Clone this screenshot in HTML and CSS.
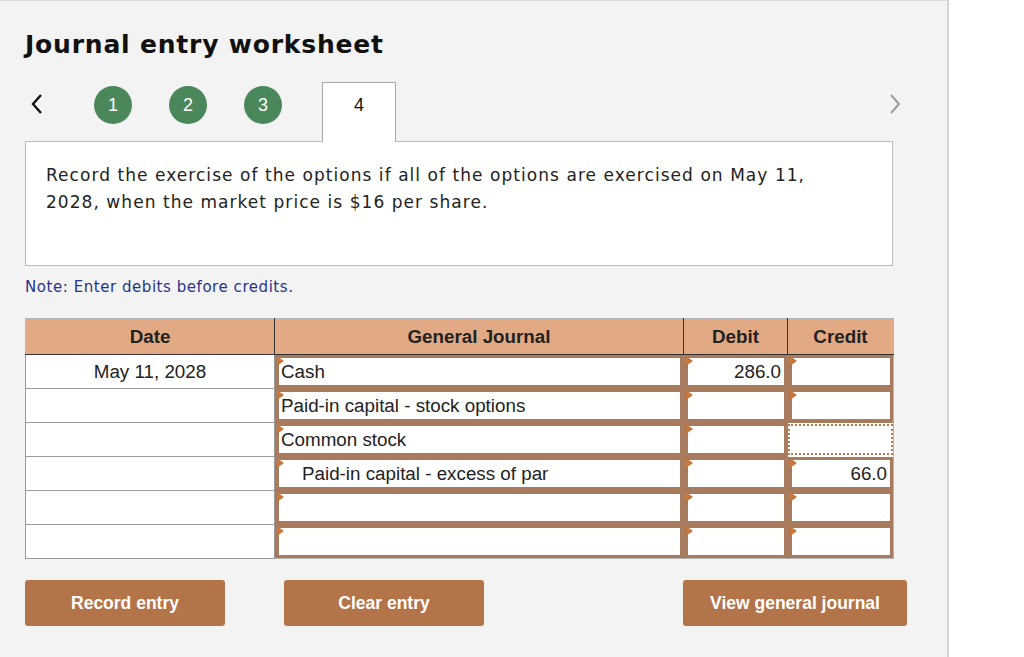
FILE: index.html
```html
<!DOCTYPE html>
<html lang="en">
<head>
    <meta charset="UTF-8">
    <title>Journal entry worksheet</title>
    <link rel="stylesheet" href="styles.css">
</head>
<body>
    <div class="worksheet">
        <h1>Journal entry worksheet</h1>

        <div class="steps">
            <svg class="nav-prev" width="16" height="24" viewBox="0 0 16 24">
                <path d="M12 3 L4 12 L12 21" fill="none" stroke="#111" stroke-width="2.4"/>
            </svg>
            <span class="step step-1">1</span>
            <span class="step">2</span>
            <span class="step">3</span>
            <span class="tab">4</span>
            <svg class="nav-next" width="16" height="24" viewBox="0 0 16 24">
                <path d="M4 3 L12 12 L4 21" fill="none" stroke="#999" stroke-width="2"/>
            </svg>
        </div>

        <div class="question">
            Record the exercise of the options if all of the options are exercised on May 11, 2028, when the market price is $16 per share.
        </div>

        <p class="note">Note: Enter debits before credits.</p>

        <table class="journal">
            <thead>
                <tr>
                    <th class="col-date">Date</th>
                    <th class="col-account">General Journal</th>
                    <th class="col-debit">Debit</th>
                    <th class="col-credit">Credit</th>
                </tr>
            </thead>
            <tbody>
                <tr>
                    <td class="date">May 11, 2028</td>
                    <td class="entry"><div class="field">Cash</div></td>
                    <td class="entry"><div class="field num">286.0</div></td>
                    <td class="entry"><div class="field num"></div></td>
                </tr>
                <tr>
                    <td class="date"></td>
                    <td class="entry"><div class="field">Paid-in capital - stock options</div></td>
                    <td class="entry"><div class="field num"></div></td>
                    <td class="entry"><div class="field num"></div></td>
                </tr>
                <tr>
                    <td class="date"></td>
                    <td class="entry"><div class="field">Common stock</div></td>
                    <td class="entry"><div class="field num"></div></td>
                    <td class="entry focused"><div class="field num"></div></td>
                </tr>
                <tr>
                    <td class="date"></td>
                    <td class="entry"><div class="field indent">Paid-in capital - excess of par</div></td>
                    <td class="entry"><div class="field num"></div></td>
                    <td class="entry"><div class="field num">66.0</div></td>
                </tr>
                <tr>
                    <td class="date"></td>
                    <td class="entry"><div class="field"></div></td>
                    <td class="entry"><div class="field num"></div></td>
                    <td class="entry"><div class="field num"></div></td>
                </tr>
                <tr>
                    <td class="date"></td>
                    <td class="entry"><div class="field"></div></td>
                    <td class="entry"><div class="field num"></div></td>
                    <td class="entry"><div class="field num"></div></td>
                </tr>
            </tbody>
        </table>

        <div class="actions">
            <button class="btn">Record entry</button>
            <button class="btn btn-clear">Clear entry</button>
            <button class="btn btn-view">View general journal</button>
        </div>
    </div>
</body>
</html>
```

FILE: styles.css
```css
body {
    margin: 0;
    background: #fff;
    font-family: 'Liberation Sans', Arial, sans-serif;
}
.worksheet {
    width: 922px;
    height: 656px;
    padding-left: 25px;
    background: #f3f3f3;
    border-top: 1px solid #dcdcdc;
    border-right: 2px solid #d2d2d2;
    overflow: hidden;
}
h1 {
    margin: 28px 0 0;
    font-family: 'DejaVu Sans', Verdana, sans-serif;
    font-size: 25px;
    letter-spacing: 0.8px;
    line-height: 32px;
    font-weight: bold;
    color: #111;
}

/* step navigation */
.steps {
    display: flex;
    align-items: flex-start;
    width: 878px;
    height: 59px;
    margin-top: 21px;
}
.nav-prev {
    margin: 10px 0 0 4px;
}
.step {
    display: flex;
    justify-content: center;
    align-items: center;
    width: 38px;
    height: 38px;
    margin: 4px 0 0 37px;
    border-radius: 50%;
    background: #4a875a;
    color: #fff;
    font-size: 18px;
}
.step-1 {
    margin-left: 49px;
}
.tab {
    position: relative;
    z-index: 1;
    box-sizing: border-box;
    width: 74px;
    height: 60px;
    margin-left: 40px;
    padding-top: 12px;
    text-align: center;
    background: #fff;
    border: 1px solid #a9a9a9;
    border-bottom: none;
    font-size: 18px;
    color: #111;
}
.nav-next {
    margin: 10px 0 0 auto;
}

.question {
    box-sizing: border-box;
    width: 868px;
    height: 125px;
    padding: 20px 60px 20px 20px;
    background: #fff;
    border: 1px solid #bcbcbc;
    font-family: 'DejaVu Sans', Verdana, sans-serif;
    font-size: 17px;
    letter-spacing: 1.05px;
    line-height: 27px;
    color: #222;
}
.note {
    margin: 11px 0 0;
    font-family: 'DejaVu Sans', Verdana, sans-serif;
    font-size: 15px;
    letter-spacing: 0.55px;
    line-height: 20px;
    color: #27348b;
}

/* journal table */
.journal {
    width: 868px;
    margin-top: 21px;
    border-collapse: collapse;
    table-layout: fixed;
    border: 1px solid #b5b5b5;
}
.col-date { width: 248px; }
.col-account { width: 408px; }
.col-debit { width: 103px; }
.col-credit { width: 105px; }
.journal th {
    height: 35px;
    padding: 0;
    background: #e2aa84;
    border-left: 1px solid #333;
    border-bottom: 1px solid #333;
    font-size: 18.8px;
    font-weight: bold;
    color: #222;
}
.journal th:first-child {
    border-left: none;
}
.journal td {
    height: 33px;
    padding: 0;
}
.date {
    background: #fff;
    border: 1px solid #9a9a9a;
    text-align: center;
    font-size: 18.8px;
    color: #222;
}
.entry {
    background: #a97b5e;
    border-left: 1px solid #8a8a8a;
}
.entry .field {
    position: relative;
    box-sizing: border-box;
    height: 27px;
    margin: 3px 3px 3px 4px;
    padding: 3px 3px 0 2px;
    background: #fff;
    font-size: 18.8px;
    line-height: 22px;
    color: #222;
    white-space: nowrap;
}
.entry .field::before {
    content: "";
    position: absolute;
    left: -2px;
    top: -2px;
    border-top: 5px solid transparent;
    border-bottom: 5px solid transparent;
    border-left: 7px solid #c8783c;
}
.entry .num {
    text-align: right;
}
.entry .indent {
    padding-left: 23px;
}
.focused {
    background: #fff;
}
.focused .field {
    margin: 1px 0 1px 0;
    height: 31px;
    border: 2px dotted #b87a50;
}
.focused .field::before {
    display: none;
}

/* buttons */
.actions {
    display: grid;
    grid-template-columns: 259px 399px auto;
    margin-top: 21px;
}
.btn {
    height: 46px;
    width: 200px;
    padding: 0;
    border: none;
    border-radius: 3px;
    background: #b47449;
    color: #fff;
    font-family: 'Liberation Sans', Arial, sans-serif;
    font-size: 17.5px;
    font-weight: bold;
    cursor: pointer;
}
.btn-view {
    width: 224px;
}
```
